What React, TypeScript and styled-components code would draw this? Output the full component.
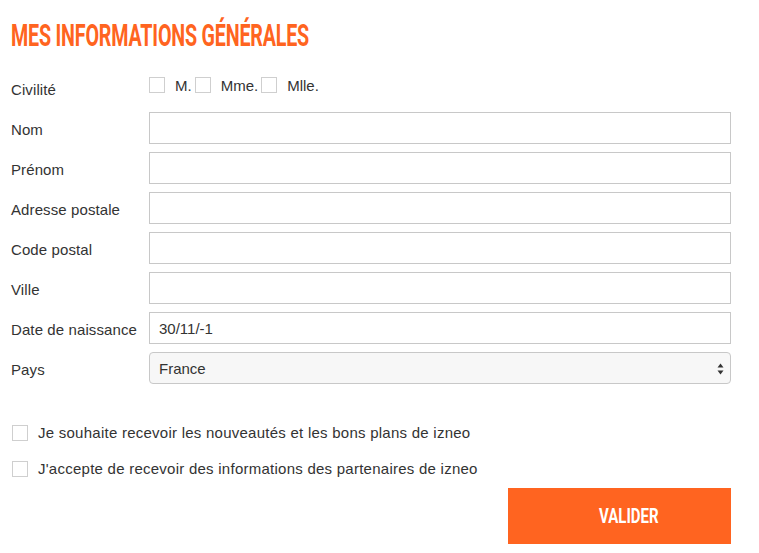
import styled, { createGlobalStyle } from 'styled-components';

const GlobalStyle = createGlobalStyle`
  body {
    margin: 0;
    background: #fff;
    font-family: "Liberation Sans", Arial, sans-serif;
    color: #333;
  }
`;

const Page = styled.div`
  width: 759px;
  padding: 0 28px 0 11px;
  box-sizing: border-box;
`;

const Title = styled.h1`
  display: inline-block;
  margin: 22px 0 22px;
  font-family: Roboto, "Liberation Sans", sans-serif;
  font-weight: 700;
  font-size: 31px;
  line-height: 28px;
  color: #ff6420;
  letter-spacing: -0.3px;
  transform: scaleX(0.635);
  transform-origin: left center;
  white-space: nowrap;
`;

const Form = styled.form`
  display: flex;
  flex-direction: column;
  gap: 8px;
`;

const Row = styled.div`
  display: grid;
  grid-template-columns: 138px 582px;
  align-items: center;
  min-height: 32px;
`;

const Label = styled.label`
  font-size: 15px;
  letter-spacing: 0.1px;
  padding-top: 3px;
`;

const Input = styled.input`
  box-sizing: border-box;
  width: 100%;
  height: 32px;
  border: 1px solid #c8c8c8;
  padding: 0 9px;
  font-family: inherit;
  font-size: 15px;
  color: #333;
  outline: none;
`;

const SelectBox = styled.div`
  position: relative;
  box-sizing: border-box;
  height: 32px;
  border: 1px solid #c8c8c8;
  border-radius: 4px;
  background: #f7f7f7;
  display: flex;
  align-items: center;
  padding: 0 9px;
  font-size: 15px;
`;

const Arrows = styled.svg`
  position: absolute;
  right: 6px;
  top: 10px;
`;

const Box = styled.span`
  display: inline-block;
  box-sizing: border-box;
  width: 16px;
  height: 16px;
  border: 1px solid #cfcfcf;
  background: #fff;
  flex-shrink: 0;
`;

const Options = styled.div`
  display: flex;
  align-items: center;
  gap: 3px;
  font-size: 15px;
  margin-top: -6px;
`;

const Option = styled.span`
  display: inline-flex;
  align-items: center;
  gap: 10px;
`;

const Consents = styled.div`
  display: flex;
  flex-direction: column;
  gap: 19px;
  margin-top: 40px;
  padding-left: 1px;
`;

const Consent = styled.div`
  display: flex;
  align-items: center;
  gap: 10px;
  font-size: 15px;
  letter-spacing: 0.25px;
`;

const Footer = styled.div`
  display: flex;
  justify-content: flex-end;
  margin-top: 11px;
`;

const Button = styled.button`
  width: 223px;
  height: 56px;
  border: none;
  padding: 0 0 0 18px;
  background: #ff6420;
  color: #fff;
  font-family: Roboto, "Liberation Sans", sans-serif;
  font-weight: 700;
  font-size: 20px;
  cursor: pointer;
`;

const ButtonText = styled.span`
  display: inline-block;
  transform: scaleX(0.75);
`;

const fields = ['Nom', 'Prénom', 'Adresse postale', 'Code postal', 'Ville'];
const civilities = ['M.', 'Mme.', 'Mlle.'];

export default function App() {
  return (
    <Page>
      <GlobalStyle />
      <Title>MES INFORMATIONS GÉNÉRALES</Title>
      <Form>
        <Row>
          <Label>Civilité</Label>
          <Options>
            {civilities.map((c) => (
              <Option key={c}>
                <Box />
                {c}
              </Option>
            ))}
          </Options>
        </Row>
        {fields.map((f) => (
          <Row key={f}>
            <Label>{f}</Label>
            <Input />
          </Row>
        ))}
        <Row>
          <Label>Date de naissance</Label>
          <Input defaultValue="30/11/-1" />
        </Row>
        <Row>
          <Label>Pays</Label>
          <SelectBox>
            France
            <Arrows width="7" height="12" viewBox="0 0 7 12">
              <path d="M3.5 0.5L6.5 4.5H0.5Z" fill="#333" />
              <path d="M3.5 11.5L6.5 7.5H0.5Z" fill="#333" />
            </Arrows>
          </SelectBox>
        </Row>
      </Form>
      <Consents>
        <Consent>
          <Box />
          Je souhaite recevoir les nouveautés et les bons plans de izneo
        </Consent>
        <Consent>
          <Box />
          J'accepte de recevoir des informations des partenaires de izneo
        </Consent>
      </Consents>
      <Footer>
        <Button type="button">
          <ButtonText>VALIDER</ButtonText>
        </Button>
      </Footer>
    </Page>
  );
}
